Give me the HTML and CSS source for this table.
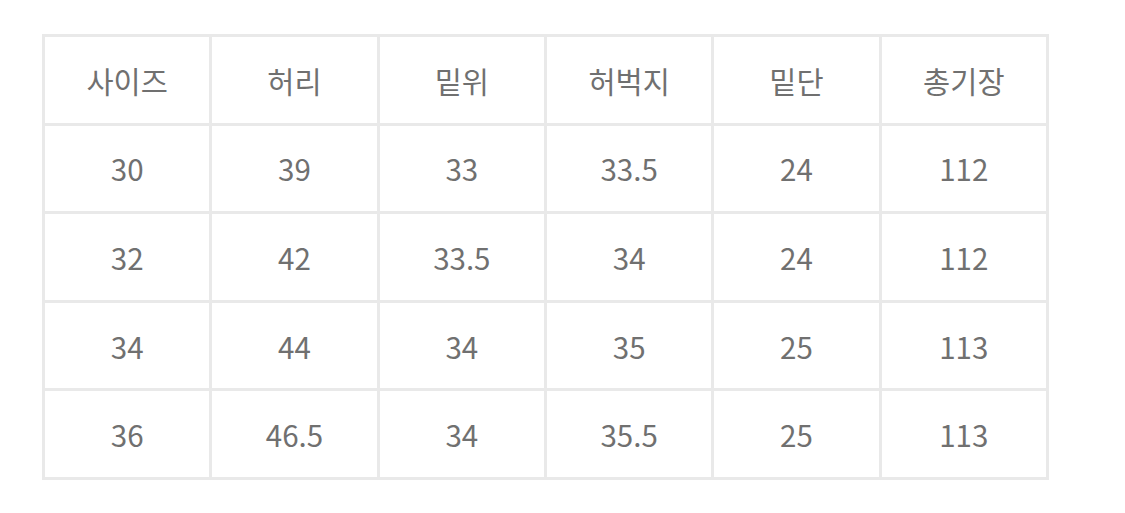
FILE: index.html
```html
<!DOCTYPE html>
<html lang="ko">
<head>
<meta charset="utf-8">
<link rel="stylesheet" href="styles.css">
</head>
<body>
<div class="wrap">
<table class="size-table">
<thead>
<tr><th>사이즈</th><th>허리</th><th>밑위</th><th>허벅지</th><th>밑단</th><th>총기장</th></tr>
</thead>
<tbody>
<tr><td>30</td><td>39</td><td>33</td><td>33.5</td><td>24</td><td>112</td></tr>
<tr><td>32</td><td>42</td><td>33.5</td><td>34</td><td>24</td><td>112</td></tr>
<tr><td>34</td><td>44</td><td>34</td><td>35</td><td>25</td><td>113</td></tr>
<tr><td>36</td><td>46.5</td><td>34</td><td>35.5</td><td>25</td><td>113</td></tr>
</tbody>
</table>
</div>
</body>
</html>
```
FILE: styles.css
```css
html, body {
  margin: 0;
  padding: 0;
  background: #ffffff;
}
.wrap {
  padding: 34px 0 0 42px;
}
.size-table {
  border-collapse: collapse;
  table-layout: fixed;
  width: 1007px;
  font-family: "Noto Sans CJK KR", "Noto Sans", sans-serif;
  font-size: 29.5px;
  color: #707070;
}
.size-table th,
.size-table td {
  border: 3px solid #e9e9e9;
  height: 85.6px;
  padding: 0;
  text-align: center;
  vertical-align: middle;
  font-weight: 400;
}
```
